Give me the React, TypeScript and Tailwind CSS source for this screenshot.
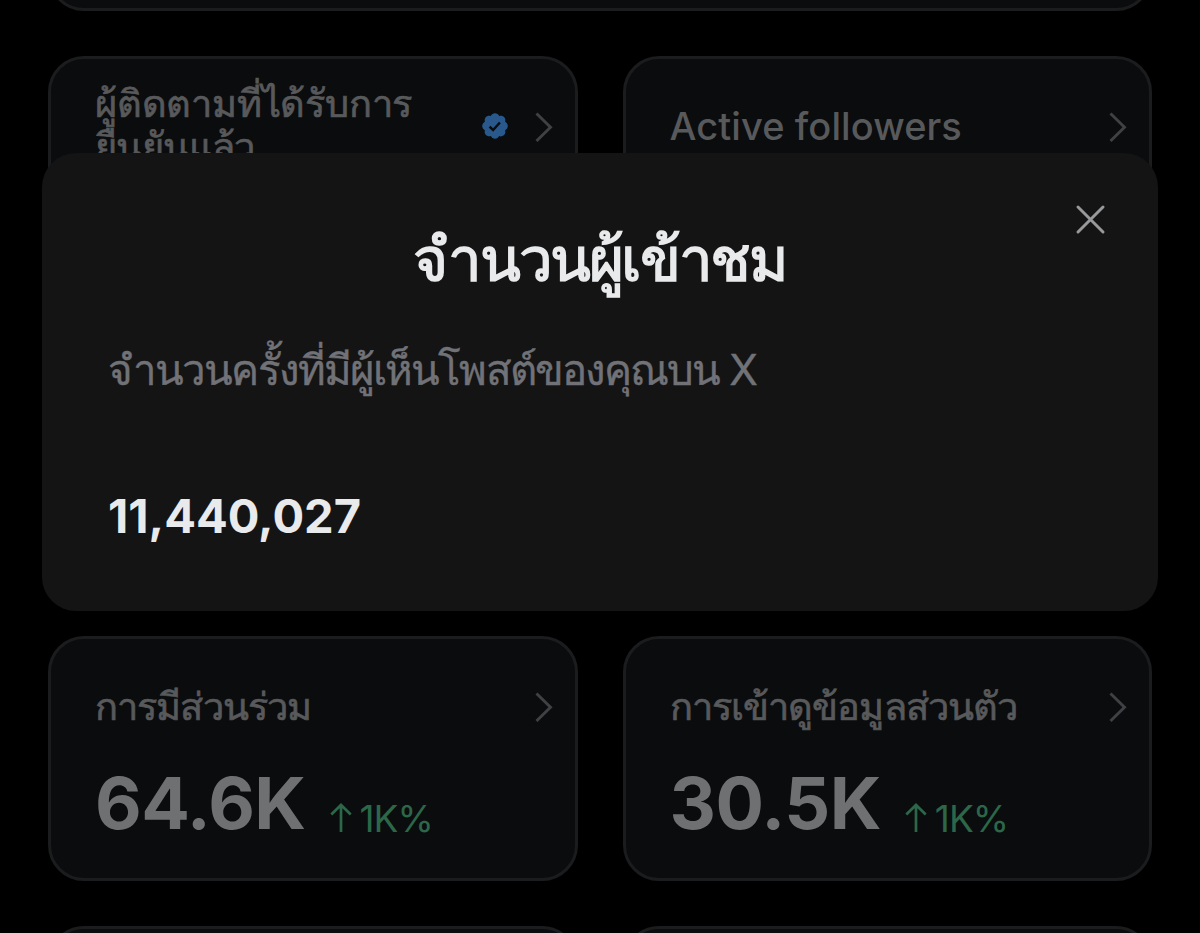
import type { ReactNode } from "react";

type Metric = {
  label: string;
  value?: string;
  change?: string;
  verified?: boolean;
};

const METRICS: Metric[] = [
  { label: "ผู้ติดตามที่ได้รับการยืนยันแล้ว", verified: true },
  { label: "Active followers" },
  { label: "" },
  { label: "" },
  { label: "การมีส่วนร่วม", value: "64.6K", change: "1K%" },
  { label: "การเข้าดูข้อมูลส่วนตัว", value: "30.5K", change: "1K%" },
  { label: "" },
  { label: "" },
];

function Chevron() {
  return (
    <svg className="mt-px h-[30px] w-[18px] shrink-0" viewBox="0 0 18 30" fill="none">
      <path d="M1.5 1.5 15.5 15.2 1.5 29" stroke="#404144" strokeWidth="2.9" />
    </svg>
  );
}

function VerifiedBadge() {
  return (
    <svg className="mr-[25px] h-[30px] w-[30px] shrink-0" viewBox="0 0 22 22">
      <path
        fill="#28588c"
        d="M20.396 11c-.018-.646-.215-1.275-.57-1.816-.354-.54-.852-.972-1.438-1.246.223-.607.27-1.264.14-1.897-.131-.634-.437-1.218-.882-1.687-.47-.445-1.053-.75-1.687-.882-.633-.13-1.29-.083-1.897.14-.273-.587-.704-1.086-1.245-1.44S11.647 1.62 11 1.604c-.646.017-1.273.213-1.813.568s-.969.854-1.24 1.44c-.608-.223-1.267-.272-1.902-.14-.635.13-1.22.436-1.69.882-.445.47-.749 1.055-.878 1.688-.13.633-.08 1.29.144 1.896-.587.274-1.087.705-1.443 1.245-.356.54-.555 1.17-.574 1.817.02.647.218 1.276.574 1.817.356.54.856.972 1.443 1.245-.224.606-.274 1.263-.144 1.896.13.634.433 1.218.877 1.688.47.443 1.054.747 1.687.878.633.132 1.29.084 1.897-.136.274.586.705 1.084 1.246 1.439.54.354 1.17.551 1.816.569.647-.016 1.276-.213 1.817-.567s.972-.854 1.245-1.44c.604.239 1.266.296 1.903.164.636-.132 1.22-.447 1.68-.907.46-.46.776-1.044.908-1.681s.075-1.299-.165-1.903c.586-.274 1.084-.705 1.439-1.246.354-.54.551-1.17.569-1.816z"
      />
      <path d="m7 11.4 2.6 2.5 5-5.5" fill="none" stroke="#0b0c0e" strokeWidth="1.8" />
    </svg>
  );
}

function UpArrow() {
  return (
    <svg className="h-[29px] w-[22px]" viewBox="0 0 22 29" fill="none">
      <path d="M11 29V2M1.3 11.5 11 2l9.7 9.5" stroke="#2b6748" strokeWidth="2.7" />
    </svg>
  );
}

function Card({ children }: { children?: ReactNode }) {
  return (
    <div className="h-[245px] rounded-[36px] border-[3px] border-[#1b1c1e] bg-[#0b0c0e] pt-[45px] pr-[22px] pl-[44px]">
      {children}
    </div>
  );
}

function CardLabel({ label, verified }: Metric) {
  if (verified) {
    return (
      <span className="-mt-[3px] text-[38px] leading-[43px] font-medium tracking-[-0.2px] text-[#58595b] [-webkit-text-stroke:0.7px]">
        ผู้ติดตามที่ได้รับการ
        <br />
        <span className="tracking-[-0.6px]">ยืนยันแล้ว</span>
      </span>
    );
  }

  // Thai glyphs have no medium weight, so they get a thin stroke instead
  const isThai = /[\u0e00-\u0e7f]/.test(label);
  return (
    <span
      className={
        isThai
          ? "text-[38px] leading-[43px] tracking-[-0.9px] text-[#58595b] [-webkit-text-stroke:0.7px]"
          : "text-[38px] leading-[43px] font-medium tracking-[0.1px] text-[#58595b]"
      }
    >
      {label}
    </span>
  );
}

function MetricCard(metric: Metric) {
  const { label, value, change, verified } = metric;
  if (!label) return <Card />;

  return (
    <Card>
      <div className="flex h-11 items-center">
        <CardLabel {...metric} />
        <div className="ml-auto flex items-center">
          {verified && <VerifiedBadge />}
          <Chevron />
        </div>
      </div>
      {value && (
        <div className="mt-[30px] flex items-end">
          <span className="text-[72px] leading-[90px] font-bold tracking-[-0.6px] text-[#6f7072]">
            {value}
          </span>
          <span className="mb-[10px] ml-6 flex items-baseline gap-2 text-[37px] leading-[38px] tracking-[-1px] text-[#2b6748]">
            <UpArrow />
            {change}
          </span>
        </div>
      )}
    </Card>
  );
}

function ViewsDialog() {
  return (
    <div className="absolute top-[153px] left-[42px] h-[458px] w-[1116px] rounded-[34px] bg-[#141414] px-[66px] pt-[66px]">
      <svg
        className="absolute top-[51px] right-[52px] h-[31px] w-[31px]"
        viewBox="0 0 31 31"
        fill="none"
      >
        <path
          d="m3 3 25 25M28 3 3 28"
          stroke="#98999b"
          strokeWidth="3"
          strokeLinecap="round"
        />
      </svg>
      <h1 className="text-center text-[60px] leading-[80px] tracking-[-2.4px] text-[#e9eaec] [-webkit-text-stroke:1.5px]">
        จำนวนผู้เข้าชม
      </h1>
      <p className="mt-[41px] text-[42px] leading-[60px] tracking-[-1.9px] text-[#717277] [-webkit-text-stroke:0.4px]">
        จำนวนครั้งที่มีผู้เห็นโพสต์ของคุณบน X
      </p>
      <p className="mt-[86px] text-[47px] leading-[60px] font-bold text-[#e9eaec]">11,440,027</p>
    </div>
  );
}

export default function App() {
  return (
    <div className="relative h-[933px] w-[1200px] overflow-hidden bg-black font-['Inter',sans-serif]">
      <div className="-mt-[234px] flex flex-col gap-[45px] px-12">
        <Card />
        <div className="grid grid-cols-2 gap-[45px]">
          {METRICS.map((metric, i) => (
            <MetricCard key={i} {...metric} />
          ))}
        </div>
      </div>
      <ViewsDialog />
    </div>
  );
}
